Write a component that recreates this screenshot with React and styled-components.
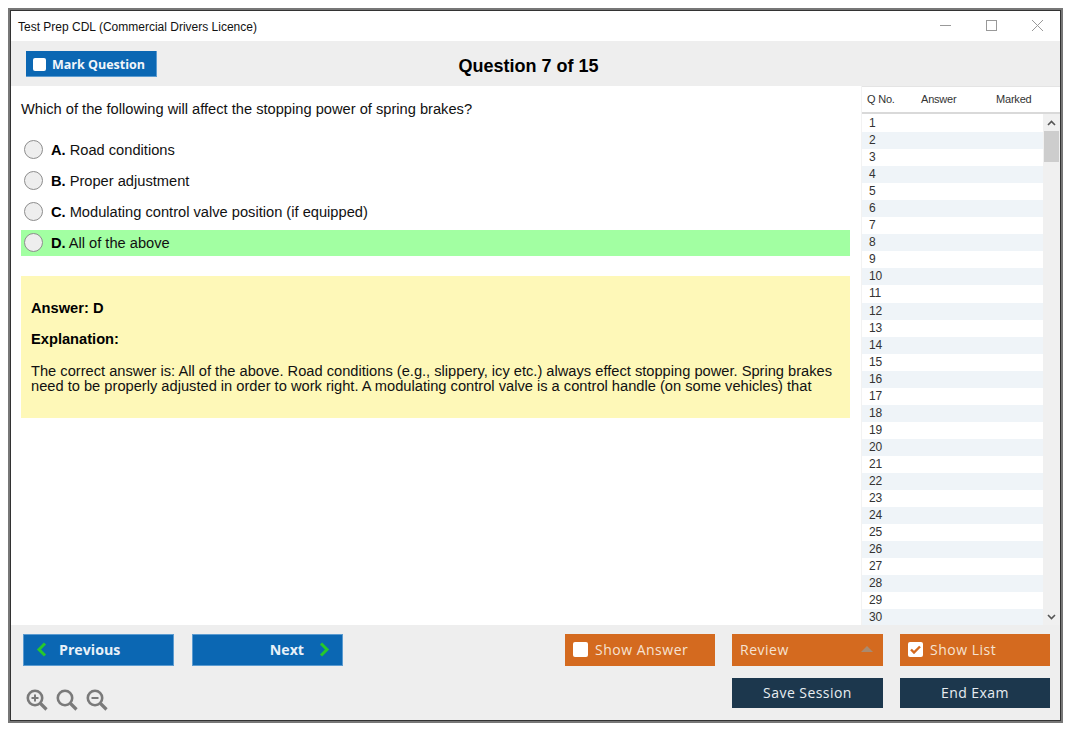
import React from 'react';
import styled, { createGlobalStyle } from 'styled-components';

const GlobalStyle = createGlobalStyle`
  html, body {
    margin: 0;
    padding: 0;
    background: #fff;
  }
  body {
    padding: 8px 0 0 8px;
    font-family: "Liberation Sans", Arial, sans-serif;
  }
`;

const Window = styled.div`
  width: 1055px;
  height: 715px;
  box-sizing: border-box;
  border: 2px solid #777;
  outline: 1px solid #333;
  outline-offset: -3px;
  padding: 1px;
  display: flex;
  flex-direction: column;
  background: #fff;
`;

const TitleBar = styled.div`
  height: 30px;
  flex: none;
  display: flex;
  align-items: center;
  justify-content: space-between;
  padding-left: 7px;
  font-size: 12px;
  color: #111;
`;

const TitleText = styled.span`
  padding-top: 2px;
`;

const WinControls = styled.div`
  display: flex;
  align-items: center;
  color: #999;
  margin-top: -2px;
`;

const WinControl = styled.span`
  width: 46px;
  height: 30px;
  display: flex;
  align-items: center;
  justify-content: center;
`;

const TopBar = styled.div`
  height: 45px;
  flex: none;
  background: #eeeeee;
  display: flex;
  align-items: flex-start;
  position: relative;
  padding: 10px 0 0 15px;
  box-sizing: border-box;
`;

const MarkButton = styled.button`
  width: 131px;
  height: 26px;
  background: #0b67b3;
  border: 1px solid #5b9bd0;
  border-width: 0 1px 1px 0;
  display: flex;
  align-items: center;
  gap: 6px;
  padding: 1px 0 0 7px;
  color: #f2f6fa;
  font-family: "Open Sans", sans-serif;
  font-weight: 700;
  font-size: 12.5px;
`;

const CheckBox = styled.span`
  width: ${(p) => p.$size || 13}px;
  height: ${(p) => p.$size || 13}px;
  background: #fff;
  border-radius: 2px;
  flex: none;
  display: flex;
  align-items: center;
  justify-content: center;
`;

const QuestionTitle = styled.div`
  position: absolute;
  left: 0;
  top: 15px;
  width: 1035px;
  text-align: center;
  font-size: 18px;
  font-weight: 700;
  color: #000;
`;

const Main = styled.div`
  flex: 1;
  min-height: 0;
  display: flex;
`;

const Content = styled.div`
  flex: 1;
  padding: 15px 0 0 10px;
  min-width: 0;
`;

const Prompt = styled.div`
  font-size: 14.67px;
  line-height: 17px;
  color: #111;
  margin-bottom: 19px;
`;

const Options = styled.div`
  width: 829px;
  display: flex;
  flex-direction: column;
  gap: 5px;
`;

const Option = styled.div`
  height: 26px;
  display: flex;
  align-items: center;
  background: ${(p) => (p.$correct ? '#a2ffa2' : 'transparent')};
  font-size: 14.67px;
  color: #111;
`;

const Radio = styled.span`
  width: 17px;
  height: 17px;
  border: 1px solid #8d8d8d;
  border-radius: 50%;
  background: #eeeeee;
  margin: -2px 8px 0 3px;
  flex: none;
`;

const OptionKey = styled.b`
  margin-right: ${(p) => (p.$tight ? 3 : 4)}px;
  color: #000;
`;

const AnswerBox = styled.div`
  width: 829px;
  height: 142px;
  margin-top: 20px;
  box-sizing: border-box;
  padding: 24px 10px 0;
  background: #fef8b8;
  font-size: 14.67px;
  color: #111;
`;

const AnswerLine = styled.div`
  font-weight: 700;
  line-height: 17px;
  margin-bottom: 14px;
  color: #000;
`;

const AnswerText = styled.div`
  line-height: 15px;
  margin-top: 16px;
`;

const ListPanel = styled.div`
  width: 198px;
  flex: none;
  display: flex;
  flex-direction: column;
  margin-left: 11px;
  background: #fff;
  box-shadow: -1px 0 0 #f2f2f2;
`;

const ListHead = styled.div`
  height: 23px;
  flex: none;
  border-top: 1px solid #e4e4e4;
  border-bottom: 2px solid #d9d9d9;
  display: grid;
  grid-template-columns: 54px 75px 1fr;
  align-items: center;
  padding: 0 0 2px 5px;
  font-size: 11px;
  letter-spacing: -0.2px;
  color: #333;
`;

const ListBody = styled.div`
  flex: 1;
  min-height: 0;
  display: flex;
  overflow: hidden;
`;

const Rows = styled.div`
  flex: 1;
  padding-top: 1px;
`;

const Row = styled.div`
  height: 17.05px;
  line-height: 17px;
  padding-left: 7px;
  font-size: 12px;
  letter-spacing: -0.2px;
  color: #333;
  background: ${(p) => (p.$alt ? '#eff4f8' : '#fff')};
`;

const ScrollBar = styled.div`
  width: 17px;
  flex: none;
  background: #f0f0f0;
  display: flex;
  flex-direction: column;
  align-items: center;
  justify-content: space-between;
  position: relative;
`;

const ScrollArrow = styled.span`
  height: 17px;
  display: flex;
  align-items: center;
  justify-content: center;
  color: #555;
`;

const ScrollThumb = styled.div`
  position: absolute;
  top: 17px;
  left: 1px;
  width: 15px;
  height: 31px;
  background: #cdcdcd;
`;

const Footer = styled.div`
  height: 95px;
  flex: none;
  background: #eeeeee;
  box-sizing: border-box;
  padding: 9px 10px 0 12px;
  display: flex;
  justify-content: space-between;
`;

const FooterLeft = styled.div`
  display: flex;
  flex-direction: column;
  justify-content: space-between;
  padding-bottom: 9px;
`;

const NavRow = styled.div`
  display: flex;
  gap: 18px;
`;

const NavButton = styled.button`
  width: 151px;
  height: 32px;
  background: #0b67b3;
  border: 1px solid #5b9bd0;
  display: flex;
  align-items: center;
  justify-content: ${(p) => (p.$right ? 'flex-end' : 'flex-start')};
  gap: ${(p) => (p.$right ? 15 : 12)}px;
  padding: 0 12px 2px;
  color: #e9f1f8;
  font-family: "Open Sans", sans-serif;
  font-weight: 700;
  font-size: 14.2px;
`;

const ZoomRow = styled.div`
  display: flex;
  gap: 8px;
  padding-left: 3px;
  color: #7a7a7a;
`;

const FooterRight = styled.div`
  display: grid;
  grid-template-columns: 150px 151px 150px;
  column-gap: 17px;
  row-gap: 12px;
  grid-auto-rows: min-content;
`;

const ActionButton = styled.button`
  height: 32px;
  background: #d46a1f;
  border: 0;
  display: flex;
  align-items: center;
  justify-content: space-between;
  padding: 0 8px 2px;
  color: #f6e3d3;
  font-family: "Open Sans", sans-serif;
  font-size: 14px;
  letter-spacing: 0.5px;
`;

const ActionLabel = styled.span`
  display: flex;
  align-items: center;
  gap: 7px;
`;

const Caret = styled.span`
  width: 0;
  height: 0;
  border-left: 6px solid transparent;
  border-right: 6px solid transparent;
  border-bottom: 6px solid #a98a70;
  margin-right: 2px;
`;

const DarkButton = styled.button`
  height: 30px;
  background: #1c374d;
  border: 0;
  padding: 0 0 1px;
  color: #e8edf1;
  font-family: "Open Sans", sans-serif;
  font-size: 14px;
  letter-spacing: 0.45px;
  grid-column: ${(p) => p.$col};
`;

const ZoomIcon = ({ mark }) => (
  <svg width="22" height="22" viewBox="0 0 22 22" fill="none" stroke="currentColor" strokeWidth="2.6">
    <circle cx="9" cy="9" r="7.2" />
    <path d="M14.5 14.5L20.5 20.5" strokeWidth="3.2" />
    {mark !== 'none' && <path d="M5.5 9h7" strokeWidth="2" />}
    {mark === 'plus' && <path d="M9 5.5v7" strokeWidth="2" />}
  </svg>
);

const Chevron = ({ dir }) => (
  <svg width="11" height="15" viewBox="0 0 11 15" fill="none" stroke="#27c82c" strokeWidth="3">
    <path d={dir === 'left' ? 'M9 1.5L3 7.5l6 6' : 'M2 1.5l6 6-6 6'} />
  </svg>
);

const options = [
  { key: 'A.', text: 'Road conditions' },
  { key: 'B.', text: 'Proper adjustment' },
  { key: 'C.', text: 'Modulating control valve position (if equipped)' },
  { key: 'D.', text: 'All of the above', correct: true },
];

const rows = Array.from({ length: 30 }, (_, i) => i + 1);

const App = () => (
  <>
    <GlobalStyle />
    <Window>
      <TitleBar>
        <TitleText>Test Prep CDL (Commercial Drivers Licence)</TitleText>
        <WinControls>
          <WinControl>
            <svg width="11" height="11" viewBox="0 0 11 11" stroke="currentColor"><path d="M0 5.5h11" /></svg>
          </WinControl>
          <WinControl>
            <svg width="11" height="11" viewBox="0 0 11 11" fill="none" stroke="currentColor"><rect x="0.5" y="0.5" width="10" height="10" /></svg>
          </WinControl>
          <WinControl>
            <svg width="11" height="11" viewBox="0 0 11 11" stroke="currentColor"><path d="M0 0l11 11M11 0L0 11" /></svg>
          </WinControl>
        </WinControls>
      </TitleBar>

      <TopBar>
        <MarkButton>
          <CheckBox />
          Mark Question
        </MarkButton>
        <QuestionTitle>Question 7 of 15</QuestionTitle>
      </TopBar>

      <Main>
        <Content>
          <Prompt>Which of the following will affect the stopping power of spring brakes?</Prompt>
          <Options>
            {options.map((o) => (
              <Option key={o.key} $correct={o.correct}>
                <Radio />
                <OptionKey $tight={o.correct}>{o.key}</OptionKey>
                {o.text}
              </Option>
            ))}
          </Options>
          <AnswerBox>
            <AnswerLine>Answer: D</AnswerLine>
            <AnswerLine>Explanation:</AnswerLine>
            <AnswerText>
              The correct answer is: All of the above. Road conditions (e.g., slippery, icy etc.) always effect stopping power. Spring brakes
              <br />
              need to be properly adjusted in order to work right. A modulating control valve is a control handle (on some vehicles) that
            </AnswerText>
          </AnswerBox>
        </Content>

        <ListPanel>
          <ListHead>
            <span>Q No.</span>
            <span>Answer</span>
            <span>Marked</span>
          </ListHead>
          <ListBody>
            <Rows>
              {rows.map((n) => (
                <Row key={n} $alt={n % 2 === 0}>{n}</Row>
              ))}
            </Rows>
            <ScrollBar>
              <ScrollArrow>
                <svg width="9" height="6" viewBox="0 0 9 6" fill="none" stroke="currentColor" strokeWidth="1.6"><path d="M1 5l3.5-3.5L8 5" /></svg>
              </ScrollArrow>
              <ScrollThumb />
              <ScrollArrow>
                <svg width="9" height="6" viewBox="0 0 9 6" fill="none" stroke="currentColor" strokeWidth="1.6"><path d="M1 1l3.5 3.5L8 1" /></svg>
              </ScrollArrow>
            </ScrollBar>
          </ListBody>
        </ListPanel>
      </Main>

      <Footer>
        <FooterLeft>
          <NavRow>
            <NavButton>
              <Chevron dir="left" />
              Previous
            </NavButton>
            <NavButton $right>
              Next
              <Chevron dir="right" />
            </NavButton>
          </NavRow>
          <ZoomRow>
            <ZoomIcon mark="plus" />
            <ZoomIcon mark="none" />
            <ZoomIcon mark="minus" />
          </ZoomRow>
        </FooterLeft>

        <FooterRight>
          <ActionButton>
            <ActionLabel>
              <CheckBox $size={15} />
              Show Answer
            </ActionLabel>
          </ActionButton>
          <ActionButton>
            <ActionLabel>Review</ActionLabel>
            <Caret />
          </ActionButton>
          <ActionButton>
            <ActionLabel>
              <CheckBox $size={15}>
                <svg width="11" height="9" viewBox="0 0 11 9" fill="none" stroke="#d46a1f" strokeWidth="2.4"><path d="M1 4.5l3 3 6-6" /></svg>
              </CheckBox>
              Show List
            </ActionLabel>
          </ActionButton>
          <DarkButton $col={2}>Save Session</DarkButton>
          <DarkButton $col={3}>End Exam</DarkButton>
        </FooterRight>
      </Footer>
    </Window>
  </>
);

export default App;
